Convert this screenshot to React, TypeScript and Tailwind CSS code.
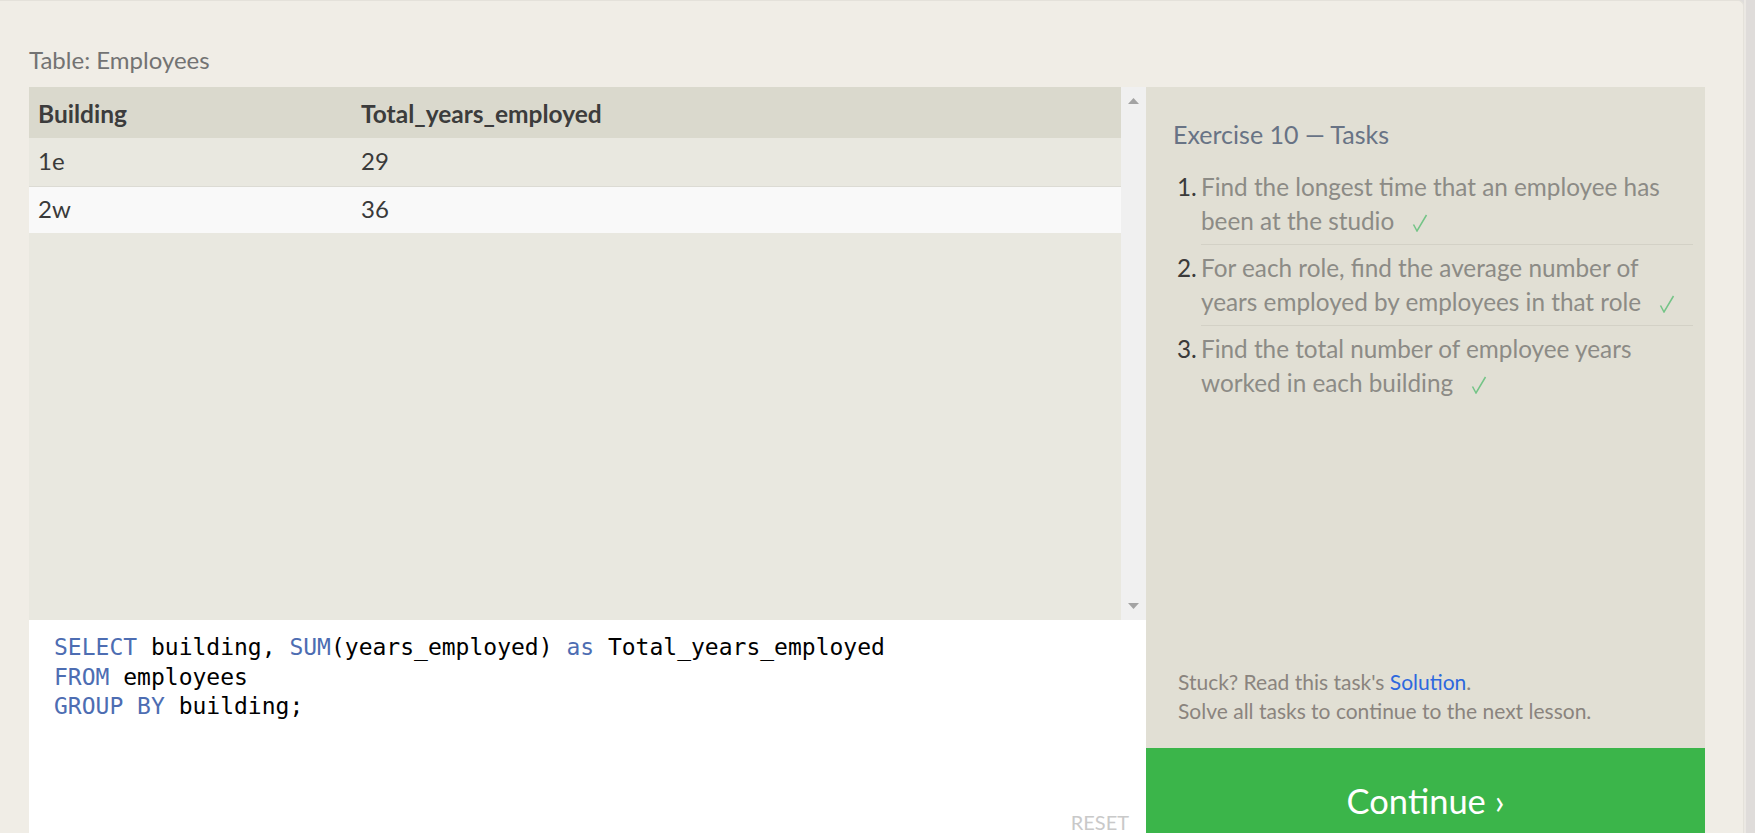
import React from "react";

const rows = [
  { building: "1e", total: "29" },
  { building: "2w", total: "36" },
];

const tasks = [
  "Find the longest time that an employee has been at the studio",
  "For each role, find the average number of years employed by employees in that role",
  "Find the total number of employee years worked in each building",
];

function Check() {
  return (
    <svg
      width="16"
      height="18"
      viewBox="0 0 16 18"
      className="inline-block ml-[18px] align-[-2px]"
    >
      <path d="M1.5 10.5 L5 17 L14.5 1" fill="none" stroke="#74c487" strokeWidth="1.5" />
    </svg>
  );
}

function Kw({ children }: { children: React.ReactNode }) {
  return <span className="text-[#4d6db2]">{children}</span>;
}

export default function App() {
  return (
    <div className="flex h-[833px] w-full overflow-hidden bg-[#dfdcda] [font-family:Lato,sans-serif]">
      {/* page card */}
      <div className="w-[1744px] shrink-0 bg-[#f0ede6] border-t border-r border-[#e4e1da] rounded-tr-[6px] pl-[29px] pt-[43px]">
        <div className="text-[24px] leading-[32px] text-[#737373] mb-[11px]">Table: Employees</div>

        <div className="flex">
          {/* results + editor */}
          <div className="w-[1117px] flex flex-col">
            <div className="flex h-[533px]">
              <div className="flex-1 bg-[#e9e8e0]">
                <div className="flex bg-[#dad9cd] text-[24.5px] leading-[26px] font-bold text-[#3c3c3c]">
                  <div className="w-[323px] pl-[9px] pt-[14px] pb-[11px]">Building</div>
                  <div className="flex-1 pl-[9px] pt-[14px] pb-[11px]">Total_years_employed</div>
                </div>
                {rows.map((r, i) => (
                  <div
                    key={r.building}
                    className={
                      i === 0
                        ? "flex bg-[#e9e8e0] border-b border-[#dcdbd4] text-[24px] leading-[26px] text-[#3a3a3a] pt-[10px] pb-[12px]"
                        : "flex bg-[#f9f9f9] text-[24px] leading-[26px] text-[#3a3a3a] pt-[9px] pb-[11px]"
                    }
                  >
                    <div className="w-[323px] pl-[9px]">{r.building}</div>
                    <div className="flex-1 pl-[9px]">{r.total}</div>
                  </div>
                ))}
              </div>
              {/* scrollbar */}
              <div className="w-[25px] bg-[#f0f0f0] flex flex-col justify-between items-center py-[11px]">
                <svg width="11" height="6" viewBox="0 0 11 6">
                  <path d="M0 6 L5.5 0 L11 6 Z" fill="#a3a3a3" />
                </svg>
                <svg width="11" height="6" viewBox="0 0 11 6">
                  <path d="M0 0 L11 0 L5.5 6 Z" fill="#a3a3a3" />
                </svg>
              </div>
            </div>

            {/* editor */}
            <div className="h-[230px] bg-white flex flex-col justify-between">
              <pre className="pl-[25px] pt-[13px] text-[23px] leading-[29.7px] text-black [font-family:DejaVu_Sans_Mono,monospace]">
                <Kw>SELECT</Kw> building, <Kw>SUM</Kw>(years_employed) <Kw>as</Kw> Total_years_employed{"\n"}
                <Kw>FROM</Kw> employees{"\n"}
                <Kw>GROUP BY</Kw> building;
              </pre>
              <div className="flex justify-end pr-[17px] pb-[16px] text-[20px] leading-[24px] text-[#c9c9c9]">RESET</div>
            </div>
          </div>

          {/* tasks panel */}
          <div className="w-[559px] h-[760px] flex flex-col bg-[#e1dfd4]">
            <div className="flex-1 flex flex-col">
              <div className="pl-[27px] pt-[31px] text-[25px] leading-[32px] text-[#687385]">
                Exercise 10 — Tasks
              </div>
              <ol className="mt-[14px] pl-[31px] pr-[12px] text-[24.3px] leading-[34px]">
                {tasks.map((t, i) => (
                  <li key={i} className="flex">
                    <span className="w-[24px] shrink-0 text-right pr-[6px] pt-[6px] text-[#3a3a3a]">{i + 1}.</span>
                    <div
                      className={
                        i < tasks.length - 1
                          ? "flex-1 pt-[6px] pb-[6px] border-b border-[#d3d1c6] text-[#8c8b86]"
                          : "flex-1 pt-[6px] pb-[6px] text-[#8c8b86]"
                      }
                    >
                      {t}
                      <Check />
                    </div>
                  </li>
                ))}
              </ol>
              <div className="mt-auto pl-[32px] pb-[23px] text-[21px] leading-[29px] text-[#8a847e]">
                <div>
                  Stuck? Read this task's <span className="text-[#2d68de]">Solution</span>.
                </div>
                <div>Solve all tasks to continue to the next lesson.</div>
              </div>
            </div>
            <div className="h-[99px] bg-[#3bb54a] pt-[33px] text-center text-[34.5px] leading-[40px] text-white">
              Continue ›
            </div>
          </div>
        </div>
      </div>
      <div className="flex-1 border-l-2 border-[#ebe8e3]" />
    </div>
  );
}
